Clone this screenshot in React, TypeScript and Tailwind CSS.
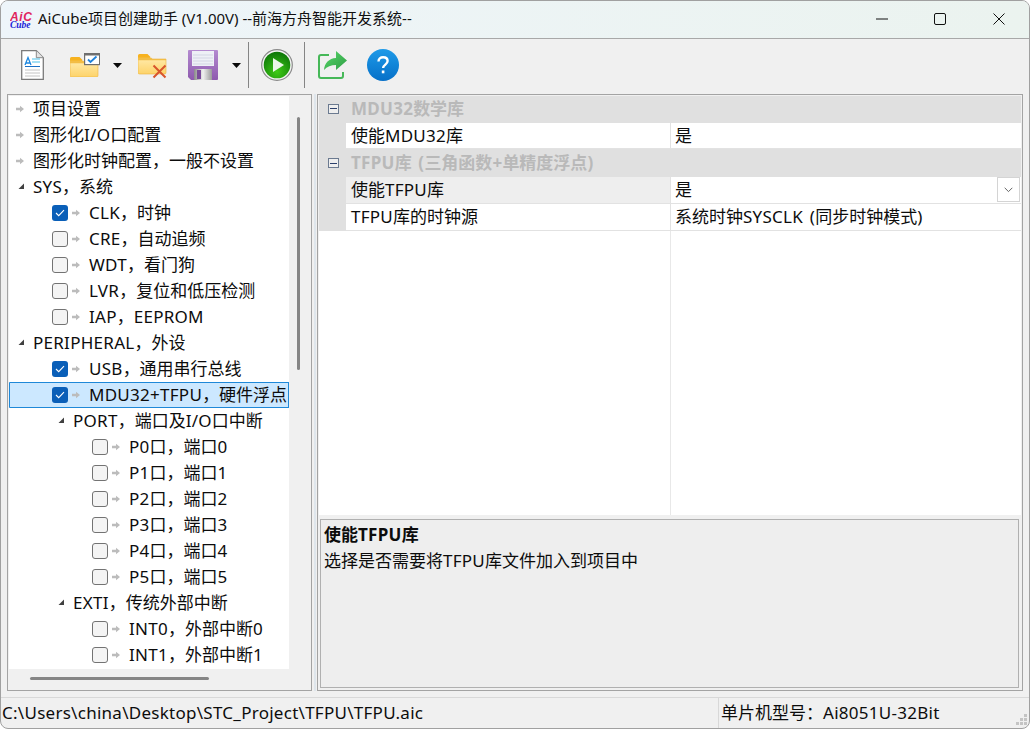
import React from "react";

const FONT = { fontFamily: '"Noto Sans","Noto Sans CJK SC",sans-serif' };

type Row = { t: string; k: "a" | "tri" | "tri2" | "c" | "c2"; on?: boolean; sel?: boolean };

const rows: Row[] = [
  { t: "项目设置", k: "a" },
  { t: "图形化I/O口配置", k: "a" },
  { t: "图形化时钟配置，一般不设置", k: "a" },
  { t: "SYS，系统", k: "tri" },
  { t: "CLK，时钟", k: "c", on: true },
  { t: "CRE，自动追频", k: "c" },
  { t: "WDT，看门狗", k: "c" },
  { t: "LVR，复位和低压检测", k: "c" },
  { t: "IAP，EEPROM", k: "c" },
  { t: "PERIPHERAL，外设", k: "tri" },
  { t: "USB，通用串行总线", k: "c", on: true },
  { t: "MDU32+TFPU，硬件浮点", k: "c", on: true, sel: true },
  { t: "PORT，端口及I/O口中断", k: "tri2" },
  { t: "P0口，端口0", k: "c2" },
  { t: "P1口，端口1", k: "c2" },
  { t: "P2口，端口2", k: "c2" },
  { t: "P3口，端口3", k: "c2" },
  { t: "P4口，端口4", k: "c2" },
  { t: "P5口，端口5", k: "c2" },
  { t: "EXTI，传统外部中断", k: "tri2" },
  { t: "INT0，外部中断0", k: "c2" },
  { t: "INT1，外部中断1", k: "c2" },
];

// Latin runs are slightly wider than Noto Sans in the reference; CJK runs are not.
function T({ s }: { s: string }) {
  const parts = s.split(/([\x00-\x7f]+)/).filter(Boolean);
  return (
    <>
      {parts.map((p, i) =>
        /^[\x00-\x7f]/.test(p) ? (
          <span key={i} className="tracking-[0.27px] [word-spacing:2px]">{p}</span>
        ) : (
          <span key={i}>{p}</span>
        )
      )}
    </>
  );
}

function Arrow() {
  return (
    <svg width="8" height="8" viewBox="0 0 8 8" className="shrink-0">
      <path d="M0 2.800h4V.8L8 4 4 7.200v-2H0z" fill="#bcbcbc" />
    </svg>
  );
}

function Tri() {
  return (
    <svg width="8" height="8" viewBox="0 0 8 8" className="mb-[3px] shrink-0">
      <path d="M7 1.500V7H1.500z" fill="#404040" />
    </svg>
  );
}

function Check({ on }: { on?: boolean }) {
  if (on)
    return (
      <span className="flex h-4 w-4 shrink-0 items-center justify-center rounded-[3px] bg-[#0a5fb8]">
        <svg width="10" height="8" viewBox="0 0 10 8">
          <path d="M1 4l2.700 2.700L9 1.200" fill="none" stroke="#fff" strokeWidth="1.100" />
        </svg>
      </span>
    );
  return <span className="h-4 w-4 shrink-0 rounded-[3px] border border-[#737373] bg-[#f4f4f4]" />;
}

function TreeRow({ r }: { r: Row }) {
  return (
    <div
      className={
        "flex h-[26px] shrink-0 items-center whitespace-nowrap " +
        (r.sel ? "rounded-l-[1px] bg-[#cce8ff] ring-1 ring-inset ring-[#1e88d8]" : "")
      }
    >
      {r.k === "a" && (
        <>
          <span className="ml-[7px] mr-[9px] flex"><Arrow /></span>
          <span><T s={r.t} /></span>
        </>
      )}
      {r.k === "tri" && (
        <>
          <span className="ml-[8px] mr-[8px] flex"><Tri /></span>
          <span><T s={r.t} /></span>
        </>
      )}
      {r.k === "tri2" && (
        <>
          <span className="ml-[48px] mr-[8px] flex"><Tri /></span>
          <span><T s={r.t} /></span>
        </>
      )}
      {r.k === "c" && (
        <>
          <span className="ml-[43px] mr-[4px] flex"><Check on={r.on} /></span>
          <Arrow />
          <span className="ml-[9px]"><T s={r.t} /></span>
        </>
      )}
      {r.k === "c2" && (
        <>
          <span className="ml-[83px] mr-[4px] flex"><Check on={r.on} /></span>
          <Arrow />
          <span className="ml-[9px]"><T s={r.t} /></span>
        </>
      )}
    </div>
  );
}

function Minus() {
  return (
    <span className="flex h-[10px] w-[11px] items-center justify-center border border-[#6b7a90] bg-[#eeeeee]">
      <span className="h-px w-[7px] bg-[#2b3f6b]" />
    </span>
  );
}

function Section({ t, h }: { t: string; h: string }) {
  return (
    <div className={"flex items-center bg-[#e0e0e0] " + h}>
      <span className="flex w-[27px] justify-center pl-px"><Minus /></span>
      <span className="whitespace-pre pl-[5px] font-bold text-[#b9b9b9]"><T s={t} /></span>
    </div>
  );
}

function PropRow({ n, v, sel, drop, h }: { n: string; v: string; sel?: boolean; drop?: boolean; h: string }) {
  return (
    <div className={"flex bg-[#e0e0e0] " + h}>
      <span className="w-[27px] shrink-0" />
      <div className="flex flex-1 border-b border-[#e2e2e2] bg-white">
        <span className={"flex w-[324px] shrink-0 items-center pl-[5px] " + (sel ? "bg-[#eeeeee]" : "")}><T s={n} /></span>
        <span className="w-px shrink-0 bg-[#e2e2e2]" />
        <span className="relative flex flex-1 items-center whitespace-pre pl-1">
          <T s={v} />
          {drop && (
            <span className="absolute right-px top-0 flex h-[25px] w-[23px] items-center justify-center border border-[#d4d4d4] bg-white">
              <svg width="9" height="6" viewBox="0 0 9 6">
                <path d="M.7.8l3.800 3.800L8.300.8" fill="none" stroke="#555" strokeWidth="0.900" />
              </svg>
            </span>
          )}
        </span>
      </div>
    </div>
  );
}

function Folder({ id }: { id: string }) {
  return (
    <>
      <defs>
        <linearGradient id={id} x1="0" y1="0" x2="0" y2="1">
          <stop offset="0" stopColor="#ffe9a6" />
          <stop offset="1" stopColor="#fdd36a" />
        </linearGradient>
      </defs>
      <path d="M0 3.500A1.500 1.500 0 011.500 2h8l3 3H12v2H0z" fill="#f7b21f" />
      <path d="M0 7h28v13.500a1.500 1.500 0 01-1.500 1.500h-25A1.500 1.500 0 010 20.500z" fill={`url(#${id})`} stroke="#efb43c" strokeWidth="0.600" />
      <path d="M0 5.500h13l1.500 1.500H28v1.200H0z" fill="#f3bd45" />
    </>
  );
}

function Caret() {
  return (
    <svg width="9" height="5" viewBox="0 0 9 5" className="shrink-0">
      <path d="M0 0h9L4.500 5z" fill="#0a0a0a" />
    </svg>
  );
}

function Sep({ ml }: { ml: string }) {
  return <span className={"h-[46px] w-px shrink-0 bg-[#858585] " + ml} />;
}

function Toolbar() {
  return (
    <div className="flex h-[55px] items-center pb-[3px]">
      <svg width="23" height="30" viewBox="0 0 23 30" className="ml-5 shrink-0">
        <path d="M.7.7h14.600l7 7v21.600H.7z" fill="#fff" stroke="#7a7a7a" strokeWidth="1.300" />
        <path d="M15.300.7v7h7" fill="#e4e4e4" stroke="#8a8a8a" strokeWidth="1" />
        <path d="M4 15l3-7.500L10 15M5 13h4" fill="none" stroke="#1e88e0" strokeWidth="1.300" />
        <path d="M11 9h8M11 12h8" stroke="#4cc0ea" strokeWidth="1" />
        <path d="M4 16.500h15" stroke="#1a6fc4" strokeWidth="1.200" />
        <path d="M4 20h15M4 23h15M4 26h15" stroke="#c4c4c4" strokeWidth="1" />
      </svg>
      <svg width="30" height="24" viewBox="0 0 30 24" className="ml-[26px] shrink-0">
        <g transform="translate(0 2)"><Folder id="f1" /></g>
        <rect x="14.600" y=".6" width="15" height="11" fill="#fff" stroke="#6f6f6f" strokeWidth="1.200" />
        <rect x="14" y="0" width="16" height="2.500" fill="#6f6f6f" />
        <path d="M18 6.500l2.500 2.500L26.500 3.500" fill="none" stroke="#1e82dc" strokeWidth="1.800" />
      </svg>
      <span className="ml-[13px] flex"><Caret /></span>
      <svg width="29" height="27" viewBox="0 0 29 27" className="ml-4 shrink-0">
        <Folder id="f2" />
        <path d="M15.500 13.500l12 12M27.500 13.500l-12 12" stroke="#d8552c" strokeWidth="2" />
      </svg>
      <svg width="30" height="30" viewBox="0 0 30 30" className="ml-[21px] shrink-0">
        <defs>
          <linearGradient id="fp" x1="0" y1="0" x2="0" y2="1">
            <stop offset="0" stopColor="#b48ad0" />
            <stop offset="1" stopColor="#8e5aae" />
          </linearGradient>
          <linearGradient id="fm" x1="0" y1="0" x2="1" y2="0">
            <stop offset="0" stopColor="#8a8a8a" />
            <stop offset=".5" stopColor="#f0f0f0" />
            <stop offset="1" stopColor="#9a9a9a" />
          </linearGradient>
        </defs>
        <path d="M1 0h28a1 1 0 011 1v28a1 1 0 01-1 1H3l-3-3V1a1 1 0 011-1z" fill="url(#fp)" />
        <rect x="4" y="1" width="22" height="15" fill="#eef0f6" />
        <path d="M5 5h20M5 8h20M5 11h20M5 14h20" stroke="#d3d6e4" strokeWidth="1" />
        <rect x="6" y="19" width="18" height="11" fill="url(#fm)" />
        <rect x="9" y="20" width="4" height="9" fill="#7a4a9a" />
      </svg>
      <span className="ml-[14px] flex"><Caret /></span>
      <Sep ml="ml-[7px]" />
      <svg width="32" height="32" viewBox="0 0 32 32" className="ml-[12px] shrink-0">
        <defs>
          <radialGradient id="pl" cx=".5" cy=".75" r=".7">
            <stop offset="0" stopColor="#3ecb16" />
            <stop offset="1" stopColor="#0f7a08" />
          </radialGradient>
        </defs>
        <circle cx="16" cy="16" r="15.300" fill="#f4f4f4" stroke="#8a8a8a" strokeWidth="1.200" />
        <circle cx="16" cy="16" r="13.300" fill="url(#pl)" />
        <path d="M12 9l11 7-11 7z" fill="#eaf7e6" />
      </svg>
      <Sep ml="ml-[11px]" />
      <svg width="29" height="28" viewBox="0 0 29 28" className="ml-[13px] shrink-0">
        <defs>
          <linearGradient id="sh" x1="0" y1="0" x2="1" y2="1">
            <stop offset="0" stopColor="#58d66a" />
            <stop offset="1" stopColor="#2f9f45" />
          </linearGradient>
        </defs>
        <path d="M11 4H3a2 2 0 00-2 2v19a2 2 0 002 2h20a2 2 0 002-2v-4" fill="none" stroke="#46b858" strokeWidth="2" />
        <path d="M18 0l11 9.500L18 19v-5c-5 0-9 1.500-12 5 .5-7 5-11.500 12-12z" fill="url(#sh)" />
      </svg>
      <svg width="32" height="32" viewBox="0 0 32 32" className="ml-5 shrink-0">
        <defs>
          <linearGradient id="hp" x1="0" y1="0" x2="0" y2="1">
            <stop offset="0" stopColor="#1e9ae8" />
            <stop offset="1" stopColor="#0670c8" />
          </linearGradient>
        </defs>
        <circle cx="16" cy="16" r="16" fill="url(#hp)" />
        <path d="M11.500 12.500c0-2.800 2-4.300 4.600-4.300s4.500 1.500 4.500 3.900c0 3.500-4.500 3.500-4.500 7" fill="none" stroke="#fff" strokeWidth="2.400" />
        <rect x="14.800" y="21.500" width="2.600" height="2.800" fill="#fff" />
      </svg>
    </div>
  );
}

function Logo() {
  return (
    <svg width="26" height="22" viewBox="0 0 26 22" className="ml-[9px] shrink-0">
      <text x="0" y="12" fontFamily="Liberation Sans, sans-serif" fontSize="12" fontWeight="700" fontStyle="italic" fill="#e0245e" letterSpacing="0.6">AiC</text>
      <text x="0" y="19" fontFamily="Liberation Serif, serif" fontSize="9.500" fontWeight="700" fontStyle="italic" fill="#1a22d8">Cube</text>
    </svg>
  );
}

function TitleBar() {
  return (
    <div className="flex h-[38px] shrink-0 items-center border-b border-[#a8a8a8] bg-gradient-to-r from-[#eef5fa] to-[#ebf3ef]">
      <Logo />
      <span className="ml-[2px] whitespace-nowrap pb-[2px] text-[15px] text-[#101010]">AiCube项目创建助手 (V1.00V) --前海方舟智能开发系统--</span>
      <div className="ml-auto flex items-center pb-px">
        <svg width="12" height="12" viewBox="0 0 12 12" className="mr-[46px]"><path d="M0 6h12" stroke="#111" strokeWidth="1" /></svg>
        <svg width="12" height="12" viewBox="0 0 12 12" className="mr-[47px]"><rect x=".5" y=".5" width="11" height="11" rx="1.500" fill="none" stroke="#111" strokeWidth="1" /></svg>
        <svg width="12" height="12" viewBox="0 0 12 12" className="mr-6"><path d="M.5.5l11 11M11.500.5l-11 11" stroke="#111" strokeWidth="1" /></svg>
      </div>
    </div>
  );
}

export default function App() {
  return (
    <div
      style={FONT}
      className="flex h-[729px] w-[1030px] flex-col overflow-hidden rounded-[8px] border border-[#a0a0a0] bg-[#f0f0f0] text-[17px] text-[#0c0c0c]"
    >
      <TitleBar />
      <Toolbar />
      <div className="flex h-[597px] shrink-0 pl-[6px] pr-[6px]">
        <div className="flex w-[305px] shrink-0 flex-col border border-[#a3a3a3] p-px">
          <div className="flex min-h-0 flex-1">
            <div className="flex h-[573px] w-[280px] flex-col overflow-hidden bg-white">
              {rows.map((r) => <TreeRow key={r.t} r={r} />)}
            </div>
            <div className="flex-1 pl-2 pt-[21px]">
              <div className="h-[253px] w-[3px] rounded-full bg-[#858585]" />
            </div>
          </div>
          <div className="flex h-[21px] shrink-0 items-center pl-[21px]">
            <div className="h-[3px] w-[179px] rounded-full bg-[#858585]" />
          </div>
        </div>
        <div className="w-[5px] shrink-0 px-[1.500px]"><div className="h-full w-[2px] bg-[#dfe6ec]" /></div>
        <div className="flex flex-1 flex-col border border-[#a3a3a3] p-px">
          <div className="flex h-[419px] shrink-0 flex-col bg-white">
            <Section t="MDU32数学库" h="h-[27px] pb-[2px]" />
            <PropRow n="使能MDU32库" v="是" h="h-[26px]" />
            <Section t="TFPU库 (三角函数+单精度浮点)" h="h-[28px]" />
            <PropRow n="使能TFPU库" v="是" sel drop h="h-[27px]" />
            <PropRow n="TFPU库的时钟源" v="系统时钟SYSCLK (同步时钟模式)" h="h-[27px]" />
            <div className="ml-[351px] w-px flex-1 bg-[#e8e8e8]" />
          </div>
          <div className="mx-px mr-[2px] mt-1 flex h-[169px] flex-col border border-[#b0b0b0] bg-[#eeeeee] pl-[3px] pt-[2px]">
            <div className="h-[26px] font-bold leading-[26px]"><T s="使能TFPU库" /></div>
            <div className="leading-[26px]"><T s="选择是否需要将TFPU库文件加入到项目中" /></div>
          </div>
        </div>
      </div>
      <div className="mt-[6px] flex h-[31px] shrink-0 items-center border-t border-[#d8d8d8] pl-px">
        <span className="w-[716px] shrink-0 whitespace-nowrap"><T s="C:\Users\china\Desktop\STC_Project\TFPU\TFPU.aic" /></span>
        <span className="h-full w-px bg-[#d8d8d8]" />
        <span className="ml-[2px] whitespace-nowrap"><T s="单片机型号：Ai8051U-32Bit" /></span>
        <svg width="12" height="12" viewBox="0 0 12 12" className="mb-[2px] ml-auto mr-px mt-auto">
          <path d="M8 0h3v3H8zM4 4h3v3H4zM8 4h3v3H8zM0 8h3v3H0zM4 8h3v3H4zM8 8h3v3H8z" fill="#c4c4c4" />
        </svg>
      </div>
    </div>
  );
}
